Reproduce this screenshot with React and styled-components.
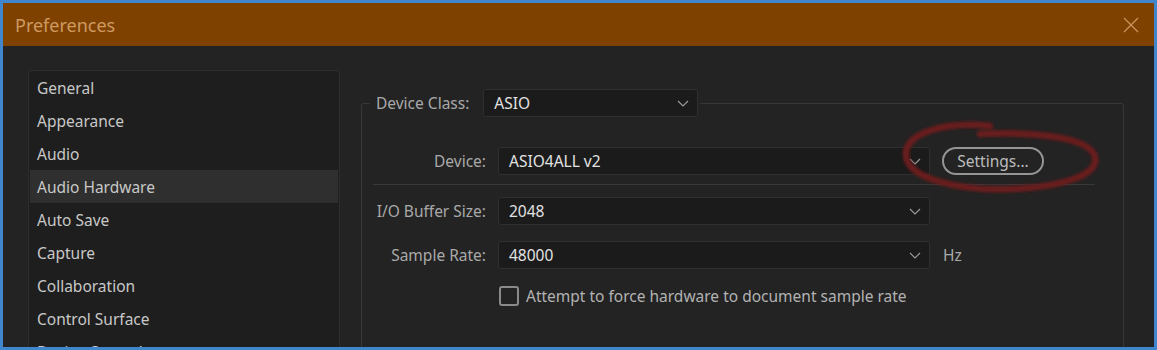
import styled, { createGlobalStyle } from 'styled-components';

const GlobalStyle = createGlobalStyle`
  * { box-sizing: border-box; }
  body {
    margin: 0;
    background: #3f86cc;
    font-family: "Noto Sans", "Open Sans", sans-serif;
  }
`;

const Frame = styled.div`
  width: 1157px;
  height: 350px;
  padding: 3px;
  background: #3f86cc;
  display: flex;
  flex-direction: column;
`;

const Window = styled.div`
  flex: 1;
  min-height: 0;
  display: flex;
  flex-direction: column;
  background: #232323;
  overflow: hidden;
`;

const TitleBar = styled.header`
  height: 43px;
  flex-shrink: 0;
  display: flex;
  align-items: center;
  justify-content: space-between;
  padding: 0 12px 0 12px;
  background: #7e4100;
  color: #cf9a60;
  font-size: 18px;
`;

const CloseButton = styled.button`
  width: 22px;
  height: 22px;
  padding: 0;
  border: none;
  background: transparent;
  display: flex;
  align-items: center;
  justify-content: center;
  & svg {
    stroke: #c8935c;
  }
`;

const Body = styled.div`
  flex: 1;
  min-height: 0;
  display: flex;
  gap: 21px;
  padding: 24px 30px 0 25px;
`;

const Sidebar = styled.ul`
  width: 312px;
  flex-shrink: 0;
  margin: 0;
  padding: 0 1px;
  list-style: none;
  background: #1e1e1e;
  border: 1px solid #2d2d2d;
  border-bottom: none;
  border-radius: 3px 3px 0 0;
`;

const NavItem = styled.li`
  height: 33px;
  display: flex;
  align-items: center;
  padding-left: 7px;
  color: #c8c8c8;
  font-size: 15.5px;
  background: ${(p) => (p.$active ? '#2f2f2f' : 'transparent')};
`;

const Content = styled.div`
  flex: 1;
  display: flex;
  flex-direction: column;
  padding-top: 19px;
`;

const Group = styled.fieldset`
  flex: 1;
  margin: 0;
  min-width: 0;
  padding: 30px 28px 0 8px;
  border: 1px solid #373737;
  border-bottom: none;
  border-radius: 3px 3px 0 0;
`;

const Legend = styled.legend`
  display: flex;
  align-items: center;
  gap: 14px;
  padding: 0 2px 0 6px;
`;

const Label = styled.span`
  color: #a9a9a9;
  font-size: 15.5px;
  white-space: nowrap;
`;

const RowLabel = styled(Label)`
  width: 110px;
  flex-shrink: 0;
  text-align: right;
`;

const Rows = styled.div`
  display: flex;
  flex-direction: column;
  padding-left: 6px;
`;

const Row = styled.div`
  position: relative;
  display: flex;
  align-items: center;
  gap: 12px;
  height: 28px;
  margin-top: ${(p) => p.$top || 0}px;
`;

const Select = styled.div`
  width: ${(p) => p.$width}px;
  height: 28px;
  flex-shrink: 0;
  display: flex;
  align-items: center;
  justify-content: space-between;
  padding: 0 8px 0 10px;
  background: #1b1b1b;
  border: 1px solid #2f2f2f;
  border-radius: 3px;
  color: #e2e2e2;
  font-size: 15.5px;
`;

const Divider = styled.hr`
  margin: 9px 0 12px -3px;
  border: none;
  height: 1px;
  background: #393939;
`;

const SettingsButton = styled.button`
  width: 102px;
  height: 28px;
  padding: 0;
  border: 2px solid #959595;
  border-radius: 14px;
  background: transparent;
  color: #bcbcbc;
  font-family: inherit;
  font-size: 15.5px;
`;

const Unit = styled.span`
  color: #a9a9a9;
  font-size: 15.5px;
  margin-left: 1px;
`;

const CheckRow = styled.label`
  display: flex;
  align-items: center;
  gap: 7px;
  margin-top: 16px;
  padding-left: 123px;
  color: #b2b2b2;
  font-size: 15.5px;
`;

const CheckBox = styled.span`
  width: 20px;
  height: 20px;
  border: 2px solid #8a8a8a;
  border-radius: 3px;
`;

const Annotation = styled.svg`
  position: absolute;
  left: 520px;
  top: -30px;
  pointer-events: none;
  overflow: visible;
`;

const Chevron = () => (
  <svg width="12" height="7" viewBox="0 0 12 7" fill="none">
    <polyline points="1,1 6,6 11,1" stroke="#9d9d9d" strokeWidth="1.1" />
  </svg>
);

const Dropdown = ({ width, value }) => (
  <Select $width={width}>
    <span>{value}</span>
    <Chevron />
  </Select>
);

const items = [
  'General',
  'Appearance',
  'Audio',
  'Audio Hardware',
  'Auto Save',
  'Capture',
  'Collaboration',
  'Control Surface',
  'Device Control',
];

export default function App() {
  return (
    <>
      <GlobalStyle />
      <Frame>
        <Window>
          <TitleBar>
            <span>Preferences</span>
            <CloseButton>
              <svg width="16" height="16" viewBox="0 0 16 16" fill="none">
                <path d="M1 1 L15 15 M15 1 L1 15" strokeWidth="1.3" />
              </svg>
            </CloseButton>
          </TitleBar>
          <Body>
            <Sidebar>
              {items.map((item) => (
                <NavItem key={item} $active={item === 'Audio Hardware'}>
                  {item}
                </NavItem>
              ))}
            </Sidebar>
            <Content>
              <Group>
                <Legend>
                  <Label>Device Class:</Label>
                  <Dropdown width={215} value="ASIO" />
                </Legend>
                <Rows>
                  <Row>
                    <RowLabel>Device:</RowLabel>
                    <Dropdown width={432} value="ASIO4ALL v2" />
                    <SettingsButton>Settings...</SettingsButton>
                    <Annotation width="210" height="80" viewBox="0 0 210 80">
                      <defs>
                        <filter id="blur" x="-10%" y="-20%" width="120%" height="140%">
                          <feGaussianBlur stdDeviation="1.6" />
                        </filter>
                      </defs>
                      <path
                        d="M94 9 C 46 4, 9 17, 10 38 C 11 62, 64 74, 114 72 C 166 70, 203 58, 199 40 C 195 22, 146 14, 84 17"
                        fill="none"
                        stroke="#6a1a1c"
                        strokeWidth="6.5"
                        strokeLinecap="round"
                        filter="url(#blur)"
                      />
                    </Annotation>
                  </Row>
                  <Divider />
                  <Row>
                    <RowLabel>I/O Buffer Size:</RowLabel>
                    <Dropdown width={432} value="2048" />
                  </Row>
                  <Row $top={16}>
                    <RowLabel>Sample Rate:</RowLabel>
                    <Dropdown width={432} value="48000" />
                    <Unit>Hz</Unit>
                  </Row>
                  <CheckRow>
                    <CheckBox />
                    Attempt to force hardware to document sample rate
                  </CheckRow>
                </Rows>
              </Group>
            </Content>
          </Body>
        </Window>
      </Frame>
    </>
  );
}
